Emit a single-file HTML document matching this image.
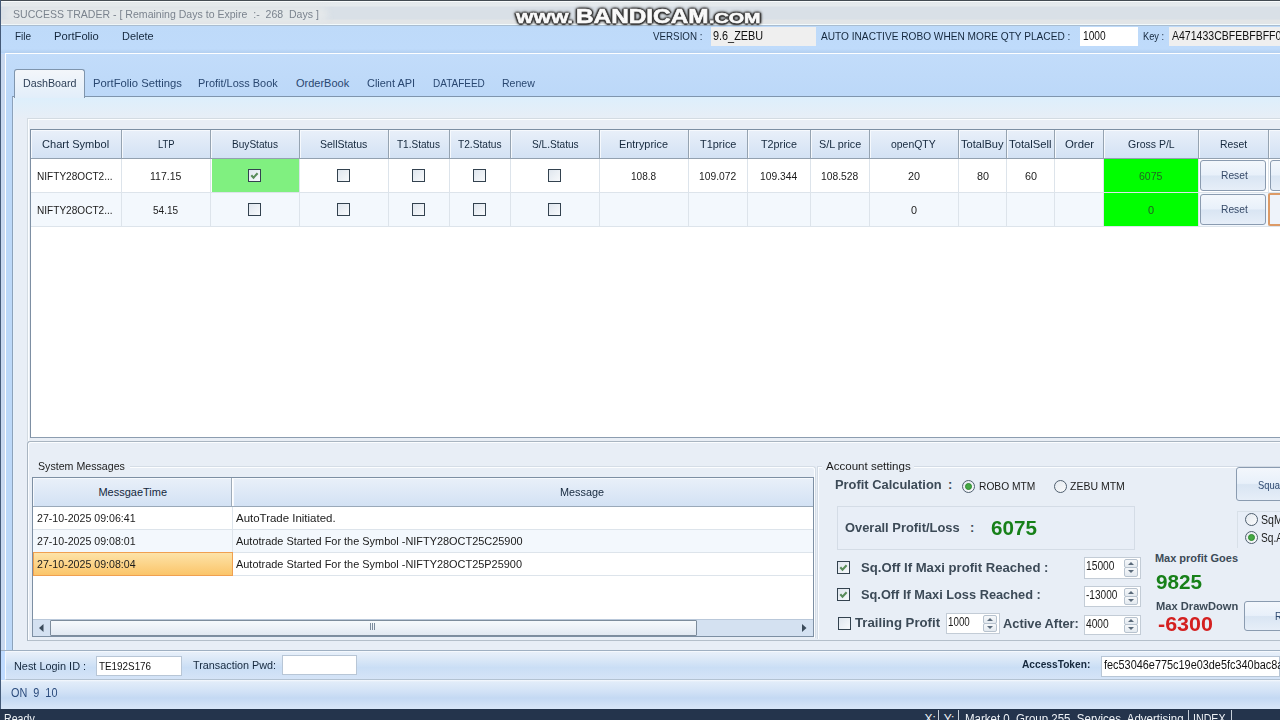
<!DOCTYPE html>
<html><head><meta charset="utf-8">
<style>
*{box-sizing:border-box;margin:0;padding:0}
html,body{width:1280px;height:720px;overflow:hidden;background:#bfdbff;font-family:"Liberation Sans",sans-serif;position:relative}
.a{position:absolute}
.t{position:absolute;white-space:nowrap;line-height:1;font-size:11px}
.cb{border:1px solid #33424f;background:linear-gradient(135deg,#dfe6ee,#f7f9fb)}
.cb svg{display:block}
.rd{width:13px;height:13px;border-radius:50%;border:1px solid #4f5f6f;background:linear-gradient(135deg,#e4e9ef,#fafbfc)}
.rd i{position:absolute;left:2px;top:2px;width:7px;height:7px;border-radius:50%;background:#45a845;border:1px solid #2f8a2f}
.btn{border:1px solid #8a9bb0;border-radius:3px;background:linear-gradient(#f3f7fc 0%,#e8f0fa 48%,#d9e5f3 52%,#e6eef8 100%)}
.gh{background:linear-gradient(#e9f0f9,#d3e2f4);border-right:1px solid #9eabb9;box-shadow:inset 1px 1px 0 #f6f9fd}
.num{background:#fff;border:1px solid #c3ccd6}
.sp{border:1px solid #b7c2ce;border-radius:2px;background:linear-gradient(#f6f8fa,#e3e9ef)}
</style></head><body>

<div class="a" style="left:0px;top:0px;width:1280px;height:25px;background:linear-gradient(#f8fbfc 0px,#f8fbfc 1px,#e3e8eb 1px,#e5eaed 5px,#d9e0e7 6px,#d9e0e7 18px,#e2e5e7 19px,#e2e5e7 23px,#f2fafc 23px,#f2fafc 24px);border-top:1px solid #434b52"></div>
<div class="a" style="left:6px;top:7px;width:322px;height:15px;background:#e4e8ea;border-radius:8px;filter:blur(3px)"></div>
<div class="t" style="left:13.10px;top:9px;font-size:11px;color:#7a838e;transform:scaleX(0.9592);transform-origin:0 0;">SUCCESS TRADER - [ Remaining Days to Expire&nbsp; :-&nbsp; 268&nbsp; Days ]</div>
<div class="a" style="left:0px;top:25px;width:1280px;height:28px;background:linear-gradient(#bedaf9 0%,#bfdbfb 85%,#b3cfef 100%);border-top:1px solid #a9bdd1"></div>
<div class="t" style="left:15.30px;top:31px;font-size:11px;color:#15283d;transform:scaleX(0.9111);transform-origin:0 0;">File</div>
<div class="t" style="left:54.40px;top:31px;font-size:11px;color:#15283d;transform:scaleX(1.0182);transform-origin:0 0;">PortFolio</div>
<div class="t" style="left:121.60px;top:31px;font-size:11px;color:#15283d;transform:scaleX(0.9938);transform-origin:0 0;">Delete</div>
<div class="t" style="left:653.20px;top:30.5px;font-size:11px;color:#15283d;transform:scaleX(0.8893);transform-origin:0 0;">VERSION :</div>
<div class="a" style="left:711px;top:27px;width:105px;height:19px;background:#efefef"></div>
<div class="t" style="left:712.70px;top:30px;font-size:12px;color:#111;transform:scaleX(0.9055);transform-origin:0 0;">9.6_ZEBU</div>
<div class="t" style="left:820.50px;top:30.5px;font-size:11px;color:#15283d;transform:scaleX(0.9203);transform-origin:0 0;">AUTO INACTIVE ROBO WHEN MORE QTY PLACED :</div>
<div class="a" style="left:1080px;top:27px;width:58px;height:19px;background:#fff"></div>
<div class="t" style="left:1082.75px;top:30px;font-size:12px;color:#111;transform:scaleX(0.8481);transform-origin:0 0;">1000</div>
<div class="t" style="left:1142.75px;top:30.5px;font-size:11px;color:#15283d;transform:scaleX(0.8400);transform-origin:0 0;">Key :</div>
<div class="a" style="left:1169px;top:27px;width:111px;height:19px;background:#efefef"></div>
<div class="t" style="left:1171.80px;top:30px;font-size:12px;color:#111;transform:scaleX(0.8768);transform-origin:0 0;">A471433CBFEBFBFF0</div>
<div class="t" style="left:516.40px;top:10px;font-size:15px;color:#fafafa;font-weight:bold;transform:scaleX(1.2391);transform-origin:0 0;-webkit-text-stroke:0.6px #fafafa;text-shadow:1.5px 0 1px #3a3a3a,-1.5px 0 1px #3a3a3a,0 1.5px 1px #3a3a3a,0 -1.5px 1px #3a3a3a,1px 1px 2px #444,-1px -1px 2px #444,1px -1px 2px #444,-1px 1px 2px #444,0 0 4px #666;">WWW.</div>
<div class="t" style="left:575.50px;top:6.5px;font-size:19.5px;color:#fafafa;font-weight:bold;transform:scaleX(1.2481);transform-origin:0 0;-webkit-text-stroke:0.6px #fafafa;text-shadow:1.5px 0 1px #3a3a3a,-1.5px 0 1px #3a3a3a,0 1.5px 1px #3a3a3a,0 -1.5px 1px #3a3a3a,1px 1px 2px #444,-1px -1px 2px #444,1px -1px 2px #444,-1px 1px 2px #444,0 0 4px #666;">BANDICAM</div>
<div class="t" style="left:709.00px;top:10px;font-size:15px;color:#fafafa;font-weight:bold;transform:scaleX(1.3154);transform-origin:0 0;-webkit-text-stroke:0.6px #fafafa;text-shadow:1.5px 0 1px #3a3a3a,-1.5px 0 1px #3a3a3a,0 1.5px 1px #3a3a3a,0 -1.5px 1px #3a3a3a,1px 1px 2px #444,-1px -1px 2px #444,1px -1px 2px #444,-1px 1px 2px #444,0 0 4px #666;">.COM</div>
<div class="a" style="left:5px;top:53px;width:1275px;height:600px;background:linear-gradient(#c2dcfa,#bcd8f8 43px);border-top:1px solid #fdfeff;border-left:1px solid #fdfeff"></div>
<div class="a" style="left:12px;top:96px;width:1268px;height:555px;background:linear-gradient(#ddeffc,#e8eef6 22px);border-top:1px solid #7f95ad;border-left:1px solid #8da2ba;box-shadow:inset 1px 0 0 #e6f2fd"></div>
<div class="a" style="left:14px;top:69px;width:71px;height:29px;background:linear-gradient(#f3f6fa,#e2eefa);border:1px solid #7f95ad;border-bottom:none;border-radius:3px 3px 0 0"></div>
<div class="t" style="left:22.70px;top:78px;font-size:11px;color:#2c3e56;transform:scaleX(0.9727);transform-origin:0 0;">DashBoard</div>
<div class="t" style="left:93.40px;top:78px;font-size:11px;color:#294770;transform:scaleX(1.0230);transform-origin:0 0;">PortFolio Settings</div>
<div class="t" style="left:198.40px;top:78px;font-size:11px;color:#294770;transform:scaleX(0.9951);transform-origin:0 0;">Profit/Loss Book</div>
<div class="t" style="left:296.00px;top:78px;font-size:11px;color:#294770;transform:scaleX(1.0000);transform-origin:0 0;">OrderBook</div>
<div class="t" style="left:367.20px;top:78px;font-size:11px;color:#294770;transform:scaleX(0.9958);transform-origin:0 0;">Client API</div>
<div class="t" style="left:432.60px;top:78px;font-size:11px;color:#294770;transform:scaleX(0.9088);transform-origin:0 0;">DATAFEED</div>
<div class="t" style="left:502.40px;top:78px;font-size:11px;color:#294770;transform:scaleX(0.9588);transform-origin:0 0;">Renew</div>
<div class="a" style="left:27px;top:118px;width:1253px;height:323px;background:#e9eef5;border-top:1px solid #d3dbe2;border-left:1px solid #d3dbe2;box-shadow:inset 1px 1px 0 #fbfdff"></div>
<div class="a" style="left:30px;top:129px;width:1250px;height:309px;background:#fff;border-top:1px solid #7d8fa3;border-left:1px solid #7d8fa3;border-bottom:1px solid #8c9db0"></div>
<div class="a" style="left:31px;top:130px;width:91px;height:28px;background:linear-gradient(#e9f0f9,#d3e2f4);border-right:1px solid #95a3b1;box-shadow:inset 1px 1px 0 #f6f9fd"></div>
<div class="t" style="left:42.25px;top:138.5px;font-size:11px;color:#15283d;transform:scaleX(1.0075);transform-origin:0 0;">Chart Symbol</div>
<div class="a" style="left:122px;top:130px;width:89px;height:28px;background:linear-gradient(#e9f0f9,#d3e2f4);border-right:1px solid #95a3b1;box-shadow:inset 1px 1px 0 #f6f9fd"></div>
<div class="t" style="left:157.88px;top:138.5px;font-size:11px;color:#15283d;transform:scaleX(0.8553);transform-origin:0 0;">LTP</div>
<div class="a" style="left:211px;top:130px;width:89px;height:28px;background:linear-gradient(#e9f0f9,#d3e2f4);border-right:1px solid #95a3b1;box-shadow:inset 1px 1px 0 #f6f9fd"></div>
<div class="t" style="left:231.62px;top:138.5px;font-size:11px;color:#15283d;transform:scaleX(0.9167);transform-origin:0 0;">BuyStatus</div>
<div class="a" style="left:300px;top:130px;width:89px;height:28px;background:linear-gradient(#e9f0f9,#d3e2f4);border-right:1px solid #95a3b1;box-shadow:inset 1px 1px 0 #f6f9fd"></div>
<div class="t" style="left:320.10px;top:138.5px;font-size:11px;color:#15283d;transform:scaleX(0.9560);transform-origin:0 0;">SellStatus</div>
<div class="a" style="left:389px;top:130px;width:61px;height:28px;background:linear-gradient(#e9f0f9,#d3e2f4);border-right:1px solid #95a3b1;box-shadow:inset 1px 1px 0 #f6f9fd"></div>
<div class="t" style="left:397.12px;top:138.5px;font-size:11px;color:#15283d;transform:scaleX(0.9115);transform-origin:0 0;">T1.Status</div>
<div class="a" style="left:450px;top:130px;width:61px;height:28px;background:linear-gradient(#e9f0f9,#d3e2f4);border-right:1px solid #95a3b1;box-shadow:inset 1px 1px 0 #f6f9fd"></div>
<div class="t" style="left:457.80px;top:138.5px;font-size:11px;color:#15283d;transform:scaleX(0.9250);transform-origin:0 0;">T2.Status</div>
<div class="a" style="left:511px;top:130px;width:89px;height:28px;background:linear-gradient(#e9f0f9,#d3e2f4);border-right:1px solid #95a3b1;box-shadow:inset 1px 1px 0 #f6f9fd"></div>
<div class="t" style="left:531.55px;top:138.5px;font-size:11px;color:#15283d;transform:scaleX(0.9196);transform-origin:0 0;">S/L.Status</div>
<div class="a" style="left:600px;top:130px;width:89px;height:28px;background:linear-gradient(#e9f0f9,#d3e2f4);border-right:1px solid #95a3b1;box-shadow:inset 1px 1px 0 #f6f9fd"></div>
<div class="t" style="left:619.30px;top:138.5px;font-size:11px;color:#15283d;transform:scaleX(0.9880);transform-origin:0 0;">Entryprice</div>
<div class="a" style="left:689px;top:130px;width:59px;height:28px;background:linear-gradient(#e9f0f9,#d3e2f4);border-right:1px solid #95a3b1;box-shadow:inset 1px 1px 0 #f6f9fd"></div>
<div class="t" style="left:699.62px;top:138.5px;font-size:11px;color:#15283d;transform:scaleX(0.9932);transform-origin:0 0;">T1price</div>
<div class="a" style="left:748px;top:130px;width:63px;height:28px;background:linear-gradient(#e9f0f9,#d3e2f4);border-right:1px solid #95a3b1;box-shadow:inset 1px 1px 0 #f6f9fd"></div>
<div class="t" style="left:760.88px;top:138.5px;font-size:11px;color:#15283d;transform:scaleX(0.9797);transform-origin:0 0;">T2price</div>
<div class="a" style="left:811px;top:130px;width:59px;height:28px;background:linear-gradient(#e9f0f9,#d3e2f4);border-right:1px solid #95a3b1;box-shadow:inset 1px 1px 0 #f6f9fd"></div>
<div class="t" style="left:818.88px;top:138.5px;font-size:11px;color:#15283d;transform:scaleX(0.9826);transform-origin:0 0;">S/L price</div>
<div class="a" style="left:870px;top:130px;width:89px;height:28px;background:linear-gradient(#e9f0f9,#d3e2f4);border-right:1px solid #95a3b1;box-shadow:inset 1px 1px 0 #f6f9fd"></div>
<div class="t" style="left:891.25px;top:138.5px;font-size:11px;color:#15283d;transform:scaleX(0.9479);transform-origin:0 0;">openQTY</div>
<div class="a" style="left:959px;top:130px;width:48px;height:28px;background:linear-gradient(#e9f0f9,#d3e2f4);border-right:1px solid #95a3b1;box-shadow:inset 1px 1px 0 #f6f9fd"></div>
<div class="t" style="left:960.80px;top:138.5px;font-size:11px;color:#15283d;transform:scaleX(1.0093);transform-origin:0 0;">TotalBuy</div>
<div class="a" style="left:1007px;top:130px;width:48px;height:28px;background:linear-gradient(#e9f0f9,#d3e2f4);border-right:1px solid #95a3b1;box-shadow:inset 1px 1px 0 #f6f9fd"></div>
<div class="t" style="left:1009.00px;top:138.5px;font-size:11px;color:#15283d;transform:scaleX(1.0238);transform-origin:0 0;">TotalSell</div>
<div class="a" style="left:1055px;top:130px;width:49px;height:28px;background:linear-gradient(#e9f0f9,#d3e2f4);border-right:1px solid #95a3b1;box-shadow:inset 1px 1px 0 #f6f9fd"></div>
<div class="t" style="left:1064.50px;top:138.5px;font-size:11px;color:#15283d;transform:scaleX(1.0357);transform-origin:0 0;">Order</div>
<div class="a" style="left:1104px;top:130px;width:95px;height:28px;background:linear-gradient(#e9f0f9,#d3e2f4);border-right:1px solid #95a3b1;box-shadow:inset 1px 1px 0 #f6f9fd"></div>
<div class="t" style="left:1127.60px;top:138.5px;font-size:11px;color:#15283d;transform:scaleX(0.9551);transform-origin:0 0;">Gross P/L</div>
<div class="a" style="left:1199px;top:130px;width:70px;height:28px;background:linear-gradient(#e9f0f9,#d3e2f4);border-right:1px solid #95a3b1;box-shadow:inset 1px 1px 0 #f6f9fd"></div>
<div class="t" style="left:1219.80px;top:138.5px;font-size:11px;color:#15283d;transform:scaleX(0.9448);transform-origin:0 0;">Reset</div>
<div class="a" style="left:1269px;top:130px;width:22px;height:28px;background:linear-gradient(#e9f0f9,#d3e2f4);border-right:1px solid #95a3b1;box-shadow:inset 1px 1px 0 #f6f9fd"></div>
<div class="a" style="left:31px;top:158px;width:1249px;height:1px;background:#93a1b0"></div>
<div class="a" style="left:32px;top:159px;width:1px;height:67px;background:#d3dae2"></div>
<div class="a" style="left:31px;top:159px;width:1249px;height:33px;background:#ffffff"></div>
<div class="a" style="left:31px;top:192px;width:1249px;height:1px;background:#dde4eb"></div>
<div class="a" style="left:121px;top:159px;width:1px;height:33px;background:#dde4eb"></div>
<div class="t" style="left:36.70px;top:170.5px;font-size:11px;color:#1b1b1b;transform:scaleX(0.9157);transform-origin:0 0;">NIFTY28OCT2...</div>
<div class="a" style="left:210px;top:159px;width:1px;height:33px;background:#dde4eb"></div>
<div class="t" style="left:150.25px;top:170.5px;font-size:11px;color:#1b1b1b;transform:scaleX(0.9545);transform-origin:0 0;">117.15</div>
<div class="a" style="left:299px;top:159px;width:1px;height:33px;background:#dde4eb"></div>
<div class="a" style="left:212px;top:159px;width:87px;height:33px;background:#80f080"></div>
<div class="a cb" style="left:248px;top:169px;width:13px;height:13px"><svg width="11" height="11" viewBox="0 0 11 11" style="position:absolute;left:0;top:0"><path d="M2.3 5.2 L4.5 7.6 L8.6 3.2" stroke="#5a8c5a" stroke-width="2.1" fill="none"/></svg></div>
<div class="a" style="left:388px;top:159px;width:1px;height:33px;background:#dde4eb"></div>
<div class="a cb" style="left:337px;top:169px;width:13px;height:13px"></div>
<div class="a" style="left:449px;top:159px;width:1px;height:33px;background:#dde4eb"></div>
<div class="a cb" style="left:412px;top:169px;width:13px;height:13px"></div>
<div class="a" style="left:510px;top:159px;width:1px;height:33px;background:#dde4eb"></div>
<div class="a cb" style="left:473px;top:169px;width:13px;height:13px"></div>
<div class="a" style="left:599px;top:159px;width:1px;height:33px;background:#dde4eb"></div>
<div class="a cb" style="left:548px;top:169px;width:13px;height:13px"></div>
<div class="a" style="left:688px;top:159px;width:1px;height:33px;background:#dde4eb"></div>
<div class="t" style="left:631.20px;top:170.5px;font-size:11px;color:#1b1b1b;transform:scaleX(0.9143);transform-origin:0 0;">108.8</div>
<div class="a" style="left:747px;top:159px;width:1px;height:33px;background:#dde4eb"></div>
<div class="t" style="left:699.30px;top:170.5px;font-size:11px;color:#1b1b1b;transform:scaleX(0.9350);transform-origin:0 0;">109.072</div>
<div class="a" style="left:810px;top:159px;width:1px;height:33px;background:#dde4eb"></div>
<div class="t" style="left:760.30px;top:170.5px;font-size:11px;color:#1b1b1b;transform:scaleX(0.9350);transform-origin:0 0;">109.344</div>
<div class="a" style="left:869px;top:159px;width:1px;height:33px;background:#dde4eb"></div>
<div class="t" style="left:821.30px;top:170.5px;font-size:11px;color:#1b1b1b;transform:scaleX(0.9350);transform-origin:0 0;">108.528</div>
<div class="a" style="left:958px;top:159px;width:1px;height:33px;background:#dde4eb"></div>
<div class="t" style="left:908.10px;top:170.5px;font-size:11px;color:#1b1b1b;transform:scaleX(0.9833);transform-origin:0 0;">20</div>
<div class="a" style="left:1006px;top:159px;width:1px;height:33px;background:#dde4eb"></div>
<div class="t" style="left:976.60px;top:170.5px;font-size:11px;color:#1b1b1b;transform:scaleX(0.9833);transform-origin:0 0;">80</div>
<div class="a" style="left:1054px;top:159px;width:1px;height:33px;background:#dde4eb"></div>
<div class="t" style="left:1024.60px;top:170.5px;font-size:11px;color:#1b1b1b;transform:scaleX(0.9833);transform-origin:0 0;">60</div>
<div class="a" style="left:1103px;top:159px;width:1px;height:33px;background:#dde4eb"></div>
<div class="a" style="left:1198px;top:159px;width:1px;height:33px;background:#dde4eb"></div>
<div class="a" style="left:1104px;top:159px;width:94px;height:33px;background:#00ff00"></div>
<div class="t" style="left:1139.00px;top:170.5px;font-size:11px;color:#236423;transform:scaleX(0.9600);transform-origin:0 0;">6075</div>
<div class="a" style="left:1268px;top:159px;width:1px;height:33px;background:#dde4eb"></div>
<div class="a btn" style="left:1200px;top:160px;width:66px;height:31px"></div>
<div class="t" style="left:1220.50px;top:170.0px;font-size:11px;color:#364a68;transform:scaleX(0.9310);transform-origin:0 0;">Reset</div>
<div class="a" style="left:1290px;top:159px;width:1px;height:33px;background:#dde4eb"></div>
<div class="a btn" style="left:1270px;top:160px;width:30px;height:31px"></div>
<div class="a" style="left:31px;top:193px;width:1249px;height:33px;background:#f3f8fd"></div>
<div class="a" style="left:31px;top:226px;width:1249px;height:1px;background:#dde4eb"></div>
<div class="a" style="left:121px;top:193px;width:1px;height:33px;background:#dde4eb"></div>
<div class="t" style="left:36.70px;top:204.5px;font-size:11px;color:#1b1b1b;transform:scaleX(0.9157);transform-origin:0 0;">NIFTY28OCT2...</div>
<div class="a" style="left:210px;top:193px;width:1px;height:33px;background:#dde4eb"></div>
<div class="t" style="left:153.20px;top:204.5px;font-size:11px;color:#1b1b1b;transform:scaleX(0.9143);transform-origin:0 0;">54.15</div>
<div class="a" style="left:299px;top:193px;width:1px;height:33px;background:#dde4eb"></div>
<div class="a cb" style="left:248px;top:203px;width:13px;height:13px"></div>
<div class="a" style="left:388px;top:193px;width:1px;height:33px;background:#dde4eb"></div>
<div class="a cb" style="left:337px;top:203px;width:13px;height:13px"></div>
<div class="a" style="left:449px;top:193px;width:1px;height:33px;background:#dde4eb"></div>
<div class="a cb" style="left:412px;top:203px;width:13px;height:13px"></div>
<div class="a" style="left:510px;top:193px;width:1px;height:33px;background:#dde4eb"></div>
<div class="a cb" style="left:473px;top:203px;width:13px;height:13px"></div>
<div class="a" style="left:599px;top:193px;width:1px;height:33px;background:#dde4eb"></div>
<div class="a cb" style="left:548px;top:203px;width:13px;height:13px"></div>
<div class="a" style="left:688px;top:193px;width:1px;height:33px;background:#dde4eb"></div>
<div class="a" style="left:747px;top:193px;width:1px;height:33px;background:#dde4eb"></div>
<div class="a" style="left:810px;top:193px;width:1px;height:33px;background:#dde4eb"></div>
<div class="a" style="left:869px;top:193px;width:1px;height:33px;background:#dde4eb"></div>
<div class="a" style="left:958px;top:193px;width:1px;height:33px;background:#dde4eb"></div>
<div class="t" style="left:911.05px;top:204.5px;font-size:11px;color:#1b1b1b;transform:scaleX(0.9833);transform-origin:0 0;">0</div>
<div class="a" style="left:1006px;top:193px;width:1px;height:33px;background:#dde4eb"></div>
<div class="a" style="left:1054px;top:193px;width:1px;height:33px;background:#dde4eb"></div>
<div class="a" style="left:1103px;top:193px;width:1px;height:33px;background:#dde4eb"></div>
<div class="a" style="left:1198px;top:193px;width:1px;height:33px;background:#dde4eb"></div>
<div class="a" style="left:1104px;top:193px;width:94px;height:33px;background:#00ff00"></div>
<div class="t" style="left:1148.00px;top:204.5px;font-size:11px;color:#236423;transform:scaleX(1.0000);transform-origin:0 0;">0</div>
<div class="a" style="left:1268px;top:193px;width:1px;height:33px;background:#dde4eb"></div>
<div class="a btn" style="left:1200px;top:194px;width:66px;height:31px"></div>
<div class="t" style="left:1220.50px;top:204.0px;font-size:11px;color:#364a68;transform:scaleX(0.9310);transform-origin:0 0;">Reset</div>
<div class="a" style="left:1290px;top:193px;width:1px;height:33px;background:#dde4eb"></div>
<div class="a" style="left:1268px;top:193px;width:30px;height:33px;border:2px solid #dc9a66;border-radius:2px;background:#eef3fa"></div>
<div class="a" style="left:27px;top:441px;width:1253px;height:200px;border:1px solid #a9b5c1;border-right:none;border-bottom:1px solid #b4bfca;background:#e8eef6;border-top-left-radius:3px;box-shadow:inset 1px 1px 0 #fbfdff"></div>
<div class="a" style="left:130px;top:466px;width:686px;height:172px;border-top:1px solid #d5dde6;border-right:1px solid #d5dde6;border-top-right-radius:3px;box-shadow:inset -1px 1px 0 #fbfdff"></div>
<div class="t" style="left:38.40px;top:461.2px;font-size:11px;color:#1b1b1b;transform:scaleX(0.9667);transform-origin:0 0;">System Messages</div>
<div class="a" style="left:32px;top:477px;width:782px;height:160px;background:#fff;border:1px solid #7d8fa3"></div>
<div class="a" style="left:33px;top:478px;width:199px;height:28px;background:linear-gradient(#e9f0f9,#d3e2f4);border-right:1px solid #9eabb9;box-shadow:inset 1px 1px 0 #f6f9fd"></div>
<div class="a" style="left:233px;top:478px;width:580px;height:28px;background:linear-gradient(#e9f0f9,#d3e2f4);box-shadow:inset 1px 1px 0 #f6f9fd"></div>
<div class="a" style="left:33px;top:506px;width:780px;height:1px;background:#9aa9b9"></div>
<div class="t" style="left:98.40px;top:487.4px;font-size:11px;color:#15283d;transform:scaleX(1.0000);transform-origin:0 0;">MessgaeTime</div>
<div class="t" style="left:560.20px;top:487.4px;font-size:11px;color:#15283d;transform:scaleX(0.9867);transform-origin:0 0;">Message</div>
<div class="a" style="left:33px;top:507px;width:780px;height:22px;background:#fff"></div>
<div class="a" style="left:33px;top:529px;width:780px;height:1px;background:#dde4eb"></div>
<div class="a" style="left:232px;top:507px;width:1px;height:22px;background:#dde4eb"></div>
<div class="t" style="left:37.10px;top:513px;font-size:11px;color:#1b1b1b;transform:scaleX(0.9647);transform-origin:0 0;">27-10-2025 09:06:41</div>
<div class="t" style="left:236.20px;top:513px;font-size:11px;color:#1b1b1b;transform:scaleX(1.0417);transform-origin:0 0;">AutoTrade Initiated.</div>
<div class="a" style="left:33px;top:530px;width:780px;height:22px;background:#f3f8fd"></div>
<div class="a" style="left:33px;top:552px;width:780px;height:1px;background:#dde4eb"></div>
<div class="a" style="left:232px;top:530px;width:1px;height:22px;background:#dde4eb"></div>
<div class="t" style="left:37.10px;top:536px;font-size:11px;color:#1b1b1b;transform:scaleX(0.9647);transform-origin:0 0;">27-10-2025 09:08:01</div>
<div class="t" style="left:236.20px;top:536px;font-size:11px;color:#1b1b1b;transform:scaleX(0.9931);transform-origin:0 0;">Autotrade Started For the Symbol -NIFTY28OCT25C25900</div>
<div class="a" style="left:33px;top:553px;width:780px;height:22px;background:#fff"></div>
<div class="a" style="left:33px;top:575px;width:780px;height:1px;background:#dde4eb"></div>
<div class="a" style="left:232px;top:553px;width:1px;height:22px;background:#dde4eb"></div>
<div class="a" style="left:33px;top:552px;width:200px;height:24px;background:linear-gradient(#fde3a8,#fbc56a);border:1px solid #f0a050"></div>
<div class="t" style="left:37.10px;top:559px;font-size:11px;color:#1b1b1b;transform:scaleX(0.9647);transform-origin:0 0;">27-10-2025 09:08:04</div>
<div class="t" style="left:236.20px;top:559px;font-size:11px;color:#1b1b1b;transform:scaleX(0.9931);transform-origin:0 0;">Autotrade Started For the Symbol -NIFTY28OCT25P25900</div>
<div class="a" style="left:33px;top:619px;width:780px;height:17px;background:#d4e1f1;border-top:1px solid #b9c8da"></div>
<div class="a" style="left:50px;top:620px;width:647px;height:16px;background:linear-gradient(#f6f9fc,#e2e9f2);border:1px solid #7d8c9c;border-radius:1px"></div>
<div class="a" style="left:370px;top:623px;width:1px;height:7px;background:#7a8a9c"></div>
<div class="a" style="left:372px;top:623px;width:1px;height:7px;background:#7a8a9c"></div>
<div class="a" style="left:374px;top:623px;width:1px;height:7px;background:#7a8a9c"></div>
<svg class="a" style="left:38.5px;top:623.5px" width="5" height="8"><path d="M4.5 0 L0 4 L4.5 8Z" fill="#3b4b5b"/></svg>
<svg class="a" style="left:801.5px;top:623.5px" width="5" height="8"><path d="M0 0 L4.5 4 L0 8Z" fill="#3b4b5b"/></svg>
<div class="a" style="left:817px;top:466px;width:463px;height:173px;border-left:1px solid #d3dbe5;border-top:1px solid #d3dbe5;box-shadow:inset 1px 1px 0 #fbfdff"></div>
<div class="a" style="left:822px;top:460px;width:92px;height:10px;background:#e8eef6"></div>
<div class="t" style="left:826.30px;top:461px;font-size:11px;color:#1b1b1b;transform:scaleX(1.0494);transform-origin:0 0;">Account settings</div>
<div class="t" style="left:834.50px;top:478px;font-size:13px;color:#3c4a57;font-weight:bold;transform:scaleX(0.9907);transform-origin:0 0;">Profit Calculation</div>
<div class="t" style="left:948.00px;top:478px;font-size:13px;color:#3c4a57;font-weight:bold;">:</div>
<div class="a rd" style="left:962px;top:480px"><i></i></div>
<div class="t" style="left:978.60px;top:481px;font-size:11px;color:#1b1b1b;transform:scaleX(0.9295);transform-origin:0 0;">ROBO MTM</div>
<div class="a rd" style="left:1054px;top:480px"></div>
<div class="t" style="left:1070.00px;top:481px;font-size:11px;color:#1b1b1b;transform:scaleX(0.9544);transform-origin:0 0;">ZEBU MTM</div>
<div class="a" style="left:837px;top:506px;width:298px;height:44px;border:1px solid #d4dce6;background:#e8eef7"></div>
<div class="t" style="left:845.30px;top:521px;font-size:13px;color:#3c4a57;font-weight:bold;transform:scaleX(0.9914);transform-origin:0 0;">Overall Profit/Loss</div>
<div class="t" style="left:970.00px;top:521px;font-size:13px;color:#3c4a57;font-weight:bold;">:</div>
<div class="t" style="left:990.80px;top:517.7px;font-size:20px;color:#178019;font-weight:bold;transform:scaleX(1.0311);transform-origin:0 0;">6075</div>
<div class="a cb" style="left:837px;top:561px;width:13px;height:13px"><svg width="11" height="11" viewBox="0 0 11 11" style="position:absolute;left:0;top:0"><path d="M2.3 5.2 L4.5 7.6 L8.6 3.2" stroke="#5a8c5a" stroke-width="2.1" fill="none"/></svg></div>
<div class="t" style="left:860.50px;top:561px;font-size:13px;color:#3c4a57;font-weight:bold;transform:scaleX(1.0097);transform-origin:0 0;">Sq.Off If Maxi profit Reached :</div>
<div class="a cb" style="left:837px;top:588px;width:13px;height:13px"><svg width="11" height="11" viewBox="0 0 11 11" style="position:absolute;left:0;top:0"><path d="M2.3 5.2 L4.5 7.6 L8.6 3.2" stroke="#5a8c5a" stroke-width="2.1" fill="none"/></svg></div>
<div class="t" style="left:860.50px;top:588px;font-size:13px;color:#3c4a57;font-weight:bold;transform:scaleX(0.9836);transform-origin:0 0;">Sq.Off If Maxi Loss Reached :</div>
<div class="a cb" style="left:838px;top:617px;width:13px;height:13px"></div>
<div class="t" style="left:855.20px;top:616.3px;font-size:13px;color:#3c4a57;font-weight:bold;transform:scaleX(1.0155);transform-origin:0 0;">Trailing Profit</div>
<div class="a num" style="left:946px;top:613px;width:54px;height:21px"><div class="a sp" style="right:2px;top:1px;width:14px;height:9px"><svg style="position:absolute;left:3px;top:2px" width="6" height="3"><path d="M0 3 L3 0 L6 3Z" fill="#5a6a7a"/></svg></div><div class="a sp" style="right:2px;bottom:1px;width:14px;height:9px"><svg style="position:absolute;left:3px;top:2px" width="6" height="3"><path d="M0 0 L3 3 L6 0Z" fill="#5a6a7a"/></svg></div></div>
<div class="t" style="left:948.00px;top:616px;font-size:12px;color:#1b1b1b;transform:scaleX(0.8148);transform-origin:0 0;">1000</div>
<div class="t" style="left:1002.50px;top:617px;font-size:13px;color:#3c4a57;font-weight:bold;transform:scaleX(0.9870);transform-origin:0 0;">Active After:</div>
<div class="a num" style="left:1084px;top:557px;width:57px;height:22px"><div class="a sp" style="right:2px;top:1px;width:14px;height:9px"><svg style="position:absolute;left:3px;top:2px" width="6" height="3"><path d="M0 3 L3 0 L6 3Z" fill="#5a6a7a"/></svg></div><div class="a sp" style="right:2px;bottom:1px;width:14px;height:10px"><svg style="position:absolute;left:3px;top:2px" width="6" height="3"><path d="M0 0 L3 3 L6 0Z" fill="#5a6a7a"/></svg></div></div>
<div class="t" style="left:1086.00px;top:560px;font-size:12px;color:#1b1b1b;transform:scaleX(0.8529);transform-origin:0 0;">15000</div>
<div class="a num" style="left:1084px;top:586px;width:57px;height:21px"><div class="a sp" style="right:2px;top:1px;width:14px;height:9px"><svg style="position:absolute;left:3px;top:2px" width="6" height="3"><path d="M0 3 L3 0 L6 3Z" fill="#5a6a7a"/></svg></div><div class="a sp" style="right:2px;bottom:1px;width:14px;height:9px"><svg style="position:absolute;left:3px;top:2px" width="6" height="3"><path d="M0 0 L3 3 L6 0Z" fill="#5a6a7a"/></svg></div></div>
<div class="t" style="left:1086.00px;top:589px;font-size:12px;color:#1b1b1b;transform:scaleX(0.8421);transform-origin:0 0;">-13000</div>
<div class="a num" style="left:1084px;top:615px;width:57px;height:20px"><div class="a sp" style="right:2px;top:1px;width:14px;height:8px"><svg style="position:absolute;left:3px;top:1px" width="6" height="3"><path d="M0 3 L3 0 L6 3Z" fill="#5a6a7a"/></svg></div><div class="a sp" style="right:2px;bottom:1px;width:14px;height:9px"><svg style="position:absolute;left:3px;top:2px" width="6" height="3"><path d="M0 0 L3 3 L6 0Z" fill="#5a6a7a"/></svg></div></div>
<div class="t" style="left:1086.00px;top:618px;font-size:12px;color:#1b1b1b;transform:scaleX(0.8519);transform-origin:0 0;">4000</div>
<div class="t" style="left:1154.90px;top:553px;font-size:11px;color:#3c4a57;font-weight:bold;transform:scaleX(1.0000);transform-origin:0 0;">Max profit Goes</div>
<div class="t" style="left:1155.80px;top:571.75px;font-size:20px;color:#178019;font-weight:bold;transform:scaleX(1.0356);transform-origin:0 0;">9825</div>
<div class="t" style="left:1155.50px;top:601px;font-size:11px;color:#3c4a57;font-weight:bold;transform:scaleX(1.0122);transform-origin:0 0;">Max DrawDown</div>
<div class="t" style="left:1157.50px;top:614.4px;font-size:20px;color:#d42020;font-weight:bold;transform:scaleX(1.0725);transform-origin:0 0;">-6300</div>
<div class="a btn" style="left:1236px;top:467px;width:60px;height:34px"></div>
<div class="t" style="left:1258.30px;top:480px;font-size:11px;color:#2f4a70;transform:scaleX(0.8519);transform-origin:0 0;">Squa</div>
<div class="a" style="left:1237px;top:511px;width:50px;height:37px;border-left:1px solid #d8e0e8;border-top:1px solid #d8e0e8;background:#e8eef7"></div>
<div class="a rd" style="left:1245px;top:513px"></div>
<div class="t" style="left:1261.25px;top:514px;font-size:12px;color:#1b1b1b;transform:scaleX(0.8800);transform-origin:0 0;">SqM</div>
<div class="a rd" style="left:1245px;top:531px"><i></i></div>
<div class="t" style="left:1261.25px;top:532px;font-size:12px;color:#1b1b1b;transform:scaleX(0.8462);transform-origin:0 0;">Sq.A</div>
<div class="a btn" style="left:1244px;top:601px;width:60px;height:30px"></div>
<div class="t" style="left:1275.00px;top:611px;font-size:11px;color:#2f4a70;transform:scaleX(0.8750);transform-origin:0 0;">R</div>
<div class="a" style="left:1px;top:650px;width:1279px;height:1px;background:#9fb0c2"></div>
<div class="a" style="left:5px;top:651px;width:1275px;height:29px;background:linear-gradient(#e8f0fa 0%,#d9e7f7 30%,#cadef5 58%,#d5e4f7 100%);border-top:1px solid #f4f8fd;border-left:1px solid #f4f8fc;border-bottom:1px solid #b3c2d2"></div>
<div class="t" style="left:14.40px;top:661px;font-size:11px;color:#15283d;transform:scaleX(0.9904);transform-origin:0 0;">Nest Login ID :</div>
<div class="a" style="left:96px;top:656px;width:86px;height:20px;background:#fff;border:1px solid #b8c6d6"></div>
<div class="t" style="left:99.20px;top:661px;font-size:11px;color:#111;transform:scaleX(0.8966);transform-origin:0 0;">TE192S176</div>
<div class="t" style="left:192.70px;top:660px;font-size:11px;color:#15283d;transform:scaleX(0.9824);transform-origin:0 0;">Transaction Pwd:</div>
<div class="a" style="left:282px;top:655px;width:75px;height:20px;background:#fff;border:1px solid #b8c6d6"></div>
<div class="t" style="left:1022.30px;top:659px;font-size:11px;color:#15283d;font-weight:bold;transform:scaleX(0.9257);transform-origin:0 0;">AccessToken:</div>
<div class="a" style="left:1101px;top:656px;width:179px;height:21px;background:#fff;border:1px solid #b8c6d6"></div>
<div class="t" style="left:1104.00px;top:659px;font-size:12px;color:#111;transform:scaleX(0.9079);transform-origin:0 0;">fec53046e775c19e03de5fc340bac8a</div>
<div class="a" style="left:1px;top:680px;width:1279px;height:29px;background:linear-gradient(#f6f9fd 0px,#e1ecf9 2px,#d2e2f6 40%,#c4d9f3 62%,#d8e6f8 100%)"></div>
<div class="t" style="left:11.25px;top:687px;font-size:12px;color:#2b4b7c;transform:scaleX(0.9038);transform-origin:0 0;">ON&nbsp; 9&nbsp; 10</div>
<div class="a" style="left:0px;top:709px;width:1280px;height:11px;background:#24344c"></div>
<div class="t" style="left:3.75px;top:713px;font-size:12px;color:#eef2f6;transform:scaleX(0.8857);transform-origin:0 0;">Ready</div>
<div class="t" style="left:924.40px;top:713px;font-size:12px;color:#eef2f6;">X:</div>
<div class="a" style="left:938px;top:710px;width:1px;height:10px;background:#c8d0da"></div>
<div class="t" style="left:943.75px;top:713px;font-size:12px;color:#eef2f6;">Y:</div>
<div class="a" style="left:958px;top:710px;width:1px;height:10px;background:#c8d0da"></div>
<div class="t" style="left:964.50px;top:713px;font-size:12px;color:#eef2f6;transform:scaleX(0.9583);transform-origin:0 0;">Market 0, Group 255, Services, Advertising</div>
<div class="a" style="left:1188px;top:710px;width:1px;height:10px;background:#c8d0da"></div>
<div class="t" style="left:1193.40px;top:713px;font-size:12px;color:#eef2f6;transform:scaleX(0.8865);transform-origin:0 0;">INDEX</div>
<div class="a" style="left:1231px;top:710px;width:1px;height:10px;background:#c8d0da"></div>
<div class="a" style="left:0px;top:0px;width:1px;height:709px;background:#445a78"></div>
<div class="a" style="left:1px;top:54px;width:4px;height:596px;background:#c8d8ef"></div>
</body></html>
